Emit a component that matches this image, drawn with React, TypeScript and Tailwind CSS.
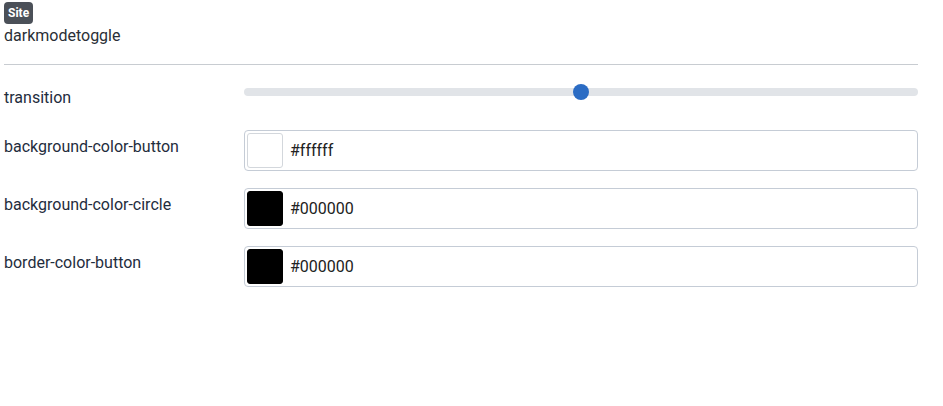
import { useState } from "react";

const colorFields = [
  { label: "background-color-button", value: "#ffffff" },
  { label: "background-color-circle", value: "#000000" },
  { label: "border-color-button", value: "#000000" },
];

export default function App() {
  const [transition] = useState(50);

  return (
    <div className="min-h-screen bg-white pl-1 pr-[25px] font-['Roboto',sans-serif] text-[#1f2d3d]">
      <div className="flex pt-[2px]">
        <span className="rounded-[4px] bg-[#4b5058] px-[4px] py-[3px] text-[12px] leading-[16px] font-bold text-white">
          Site
        </span>
      </div>
      <p className="mt-[2px] text-[16px] leading-[20px] text-[#2a2f36]">darkmodetoggle</p>

      <div className="mt-[18px] border-t border-[#c8ccd1]" />

      {/* transition slider */}
      <div className="mt-[17px] flex items-start">
        <label className="w-[240px] pt-[6px] text-[16px] leading-[20px]">transition</label>
        <div className="relative flex h-[20px] flex-1 items-center">
          <div className="h-[8px] w-full rounded-full bg-[#e1e4e8]" />
          <span
            className="absolute top-1/2 h-[16px] w-[16px] -translate-x-1/2 -translate-y-1/2 rounded-full bg-[#2b6cc4]"
            style={{ left: `${transition}%` }}
          />
        </div>
      </div>

      {/* colour pickers */}
      <div className="mt-[22px] flex flex-col gap-[17px]">
        {colorFields.map((f) => (
          <div key={f.label} className="flex items-start">
            <label className="w-[240px] pt-[7px] text-[16px] leading-[20px]">{f.label}</label>
            <div className="flex h-[41px] flex-1 items-center rounded-[4px] border border-[#c5ccd6] bg-white pl-[2px]">
              <span
                className={`h-[35px] w-[36px] rounded-[3px] border ${
                  f.value === "#ffffff" ? "border-[#d3d7dc]" : "border-black"
                }`}
                style={{ backgroundColor: f.value }}
              />
              <span className="ml-[7px] text-[16px] text-[#222]">{f.value}</span>
            </div>
          </div>
        ))}
      </div>
    </div>
  );
}
